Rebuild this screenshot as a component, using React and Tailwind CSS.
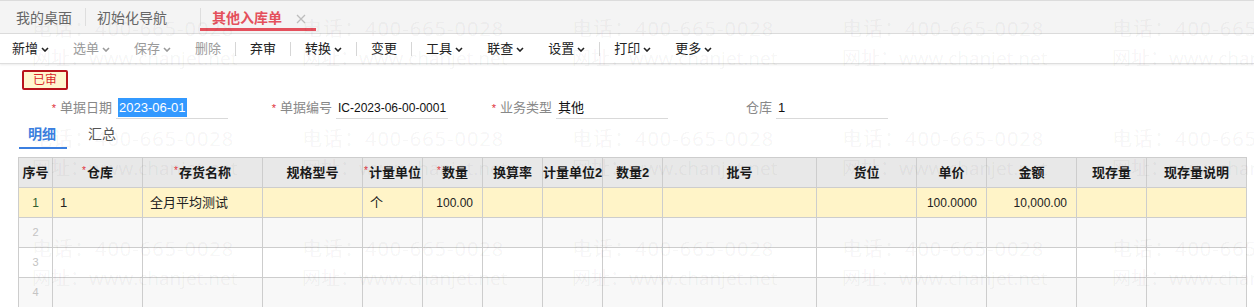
import React from "react"

const tools = [
  { label: "新增", menu: true },
  { label: "选单", menu: true, off: true },
  { label: "保存", menu: true, off: true },
  { label: "删除", off: true },
  "|",
  { label: "弃审" },
  "|",
  { label: "转换", menu: true },
  "|",
  { label: "变更" },
  "|",
  { label: "工具", menu: true },
  { label: "联查", menu: true },
  { label: "设置", menu: true },
  "|",
  { label: "打印", menu: true },
  { label: "更多", menu: true },
]

const fields = [
  { label: "单据日期", value: "2023-06-01", must: true, selected: true },
  { label: "单据编号", value: "IC-2023-06-00-0001", must: true },
  { label: "业务类型", value: "其他", must: true },
  { label: "仓库", value: "1" },
]

const columns = [
  { title: "序号", w: "w-[34px]" },
  { title: "仓库", w: "w-[90px]", must: true },
  { title: "存货名称", w: "w-[120px]", must: true },
  { title: "规格型号", w: "w-[100px]" },
  { title: "计量单位", w: "w-[60px]", must: true },
  { title: "数量", w: "w-[60px]", must: true },
  { title: "换算率", w: "w-[60px]" },
  { title: "计量单位2", w: "w-[60px]" },
  { title: "数量2", w: "w-[60px]" },
  { title: "批号", w: "w-[154px]" },
  { title: "货位", w: "w-[100px]" },
  { title: "单价", w: "w-[70px]" },
  { title: "金额", w: "w-[90px]" },
  { title: "现存量", w: "w-[70px]" },
  { title: "现存量说明", w: "w-[100px]" },
]

const firstRow = ["", "1", "全月平均测试", "", "个", "100.00", "", "", "", "", "", "100.0000", "10,000.00", "", ""]
const numeric = [5, 11, 12]

function Chevron() {
  return (
    <svg width="8" height="5" viewBox="0 0 8 5" className="ml-[3px] mt-[2px]">
      <path d="M1 1l3 3 3-3" fill="none" stroke="currentColor" strokeWidth="1.6" />
    </svg>
  )
}

function Watermark() {
  const cells = []
  for (let r = 0; r < 3; r++) {
    for (let c = 0; c < 5; c++) {
      cells.push(
        <div key={r + "-" + c} className="h-[110px]">
          <div className="h-[24px] text-[20px] leading-[24px] tracking-[1px] whitespace-nowrap">电话：400-665-0028</div>
          <div className="mt-[5px] h-[24px] text-[19px] leading-[24px] whitespace-nowrap">网址：www.chanjet.net</div>
        </div>
      )
    }
  }
  return (
    <div className="pointer-events-none absolute inset-0 overflow-hidden pl-[32px] pt-[17px] text-[rgba(0,0,0,0.055)] font-['Open_Sans','Noto_Sans_CJK_SC',sans-serif]">
      <div className="grid grid-cols-[repeat(5,270px)]">{cells}</div>
    </div>
  )
}

export default function App() {
  return (
    <div className="relative w-[1254px] h-[307px] overflow-hidden bg-white text-[#333] font-['Liberation_Sans','Noto_Sans_CJK_SC',sans-serif]">
      {/* page tabs */}
      <div className="flex h-[34px] items-stretch border-t border-b border-[#dcdcdc] bg-[#f4f4f4] text-[14px]">
        <div className="flex w-[85px] items-center pl-[16px] pt-[3px] text-[#666]">我的桌面</div>
        <div className="my-[7px] w-px bg-[#dedede]" />
        <div className="flex w-[114px] items-center pl-[11px] pt-[3px] text-[#666]">初始化导航</div>
        <div className="my-[7px] w-px bg-[#dedede]" />
        <div className="relative flex w-[115px] items-center pl-[11px] pt-[3px] font-bold text-[#e4505c]">
          其他入库单
          <svg width="10" height="10" viewBox="0 0 10 10" className="ml-[14px]">
            <path d="M1 1l8 8M9 1l-8 8" stroke="#bdbdbd" strokeWidth="1.3" />
          </svg>
          <div className="absolute bottom-[2px] left-[-1px] right-0 h-[3px] bg-[#e4505c]" />
        </div>
      </div>

      {/* toolbar */}
      <div className="flex h-[30px] items-center border-b border-[#dedede] shadow-[0_1px_2px_rgba(0,0,0,0.08)] text-[13px]">
        {tools.map((t, i) =>
          t === "|" ? (
            <div key={i} className="mx-[2px] h-[14px] w-px bg-[#d6d6d6]" />
          ) : (
            <div key={i} className={"flex items-center px-[12px] " + (t.off ? "text-[#9a9a9a]" : "text-[#222]")}>
              {t.label}
              {t.menu && <Chevron />}
            </div>
          )
        )}
      </div>

      {/* status stamp */}
      <div className="ml-[22px] mt-[6px] flex h-[20px] w-[46px] items-center justify-center rounded-[2px] border-2 border-[#b8141b] bg-[#fff7cf] text-[12px] text-[#d8262b]">
        已审
      </div>

      {/* header fields */}
      <div className="mt-[7px] flex pl-[8px] text-[13px]">
        {fields.map((f) => (
          <div key={f.label} className="flex w-[220px] items-center">
            <div className="w-[104px] text-right text-[#888]">
              {f.must && <span className="mr-[4px] text-[11px] text-[#e0303a]">*</span>}
              {f.label}
            </div>
            <div className="ml-[4px] flex h-[22px] w-[112px] items-center whitespace-nowrap border-b border-[#d9d9d9] pl-[2px] text-[#111]">
              {f.selected ? (
                <span className="bg-[#3399ff] px-[1px] text-white">{f.value}</span>
              ) : (
                <span className={f.value.length > 10 ? "text-[12px]" : ""}>{f.value}</span>
              )}
            </div>
          </div>
        ))}
      </div>

      {/* detail tabs */}
      <div className="ml-[19px] mt-[5px] flex text-[14px]">
        <div className="border-b-2 border-[#3b7fe0] pb-[3px] pl-[9px] pr-[11px] font-bold leading-[20px] text-[#3b7fe0]">明细</div>
        <div className="ml-[11px] px-[10px] pb-[3px] leading-[20px] text-[#555]">汇总</div>
      </div>

      {/* grid */}
      <table className="ml-[18px] mt-[8px] w-[1229px] table-fixed border-collapse text-[13px]">
        <colgroup>
          {columns.map((c) => (
            <col key={c.title} className={c.w} />
          ))}
        </colgroup>
        <thead>
          <tr className="h-[30px] bg-[#e8e8e8]">
            {columns.map((c) => (
              <th key={c.title} className="border border-[#cdcdcd] px-0 text-center font-bold text-[#1a1a1a] whitespace-nowrap">
                {c.must && <span className="mr-[1px] align-top text-[10px] font-normal text-[#e0303a]">*</span>}
                {c.title}
              </th>
            ))}
          </tr>
        </thead>
        <tbody>
          <tr className="h-[30px] bg-[#fff4c8]">
            {firstRow.map((v, i) => (
              <td
                key={i}
                className={
                  "border border-[#cdcdcd] px-[7px] " +
                  (i === 0
                    ? "text-center text-[12px] text-[#2f5f2f]"
                    : numeric.includes(i)
                    ? "pr-[9px] text-right text-[12px] text-[#222]"
                    : "text-[#222]")
                }
              >
                {i === 0 ? "1" : v}
              </td>
            ))}
          </tr>
          {[2, 3, 4].map((n) => (
            <tr key={n} className={"h-[30px] " + (n % 2 === 0 ? "bg-[#f8f8f8]" : "bg-white")}>
              {columns.map((c, i) => (
                <td key={c.title} className="border border-[#cdcdcd] px-[7px] text-center text-[11px] text-[#c4c4c4]">
                  {i === 0 ? n : ""}
                </td>
              ))}
            </tr>
          ))}
        </tbody>
      </table>

      <Watermark />
    </div>
  )
}
